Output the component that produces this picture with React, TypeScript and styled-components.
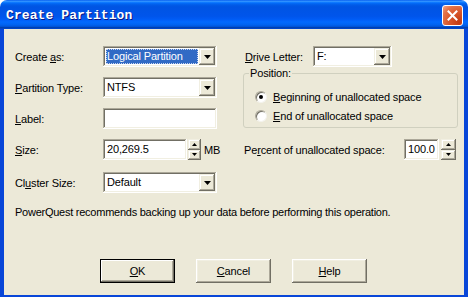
import React from 'react'
import styled, { createGlobalStyle } from 'styled-components'

const GlobalStyle = createGlobalStyle`
  html, body {
    margin: 0;
    padding: 0;
    background: #ffffff;
  }
  body {
    font-family: 'Liberation Sans', Arial, sans-serif;
    font-size: 11px;
    letter-spacing: -0.15px;
    color: #000;
  }
`

const sunken = `
  box-shadow: inset -1px -1px #ffffff, inset 1px 1px #aca899,
    inset -2px -2px #f1efe2, inset 2px 2px #716f64;
`

const raised = `
  box-shadow: inset -1px -1px #716f64, inset 1px 1px #f1efe2,
    inset -2px -2px #aca899, inset 2px 2px #ffffff;
`

const Window = styled.div`
  width: 468px;
  height: 297px;
  display: flex;
  flex-direction: column;
  overflow: hidden;
`

const TitleBar = styled.div`
  flex: none;
  height: 29px;
  box-sizing: border-box;
  padding: 2px 5px 0 6px;
  display: flex;
  align-items: center;
  justify-content: space-between;
  border-radius: 7px 7px 0 0;
  background: linear-gradient(
    to bottom,
    #0058ee 0%,
    #3593ff 4%,
    #288eff 6%,
    #127dff 8%,
    #036ffc 10%,
    #0262ee 14%,
    #0057e5 20%,
    #0054e3 24%,
    #0055eb 56%,
    #005bf5 66%,
    #026afe 76%,
    #0062ef 86%,
    #0052d6 92%,
    #0040ab 94%,
    #0046d2 100%
  );
`

const Title = styled.span`
  font-family: 'Liberation Mono', 'Courier New', monospace;
  font-weight: bold;
  font-size: 13px;
  color: #ffffff;
  text-shadow: 1px 1px #0a1883;
  letter-spacing: 0.1px;
`

const CloseButton = styled.div`
  width: 21px;
  height: 21px;
  box-sizing: border-box;
  border: 1px solid #ffffff;
  border-radius: 3px;
  display: flex;
  align-items: center;
  justify-content: center;
  background: radial-gradient(circle at 85% 85%, #c13a12 0%, #d9572b 45%, #e3734a 75%, #f0a589 100%);
`

const Body = styled.div`
  flex: 1;
  background: #ece9d8;
  border-style: solid;
  border-color: #0846d8;
  border-width: 0 4px 2px 4px;
  padding: 17px 0 0 11px;
  display: flex;
  flex-direction: column;
`

const Columns = styled.div`
  display: flex;
`

const LeftCol = styled.div`
  width: 228px;
  display: flex;
  flex-direction: column;
`

const RightCol = styled.div`
  width: 215px;
  display: flex;
  flex-direction: column;
`

const Row = styled.div<{ $mt?: number }>`
  height: 21px;
  margin-top: ${(p) => p.$mt ?? 0}px;
  display: flex;
  align-items: center;
`

const Label = styled.span<{ $w?: number; $pl?: number }>`
  box-sizing: border-box;
  width: ${(p) => (p.$w ? `${p.$w}px` : 'auto')};
  padding-left: ${(p) => p.$pl ?? 0}px;
  flex: none;
  white-space: nowrap;
`

const Combo = styled.div<{ $w: number }>`
  width: ${(p) => p.$w}px;
  height: 21px;
  box-sizing: border-box;
  padding: 2px;
  background: #ffffff;
  display: flex;
  ${sunken}
`

const ComboText = styled.div<{ $selected?: boolean }>`
  flex: 1;
  margin: 1px;
  padding-left: 1px;
  line-height: 15px;
  white-space: nowrap;
  overflow: hidden;
  background: ${(p) => (p.$selected ? '#316ac5' : 'transparent')};
  color: ${(p) => (p.$selected ? '#ffffff' : '#000000')};
  outline: ${(p) => (p.$selected ? '1px dotted #c8d4ee' : 'none')};
  outline-offset: -1px;
`

const ArrowButton = styled.div`
  width: 16px;
  flex: none;
  background: #ece9d8;
  display: flex;
  align-items: center;
  justify-content: center;
  ${raised}
`

const TextBox = styled.div<{ $w: number }>`
  width: ${(p) => p.$w}px;
  height: 21px;
  box-sizing: border-box;
  padding: 0 4px;
  background: #ffffff;
  line-height: 20px;
  ${sunken}
`

const Spinner = styled.div<{ $w: number; $ml?: number }>`
  width: ${(p) => p.$w}px;
  height: 21px;
  margin-left: ${(p) => p.$ml ?? 0}px;
  display: flex;
  flex-direction: column;
`

const SpinButton = styled.div`
  flex: 1;
  background: #ece9d8;
  display: flex;
  align-items: center;
  justify-content: center;
  ${raised}
`

const Unit = styled.span`
  margin-left: 3px;
`

const GroupBox = styled.fieldset`
  margin: 0;
  padding: 7px 0 2px 0;
  border: 1px solid #d0d0bf;
  border-radius: 3px;
  min-width: 0;
`

const Legend = styled.legend`
  margin-left: 5px;
  padding: 0 1px;
  line-height: 13px;
`

const RadioRow = styled.div`
  height: 19px;
  padding-left: 11px;
  display: flex;
  align-items: center;
  gap: 6px;
`

const RadioCircle = styled.div<{ $checked?: boolean }>`
  width: 12px;
  height: 12px;
  box-sizing: border-box;
  border-radius: 50%;
  background: #ffffff;
  border: 1px solid;
  border-color: #aca899 #f4f3ee #f4f3ee #aca899;
  box-shadow: inset 1px 1px #716f64;
  display: flex;
  align-items: center;
  justify-content: center;

  &::after {
    content: '';
    width: 4px;
    height: 4px;
    border-radius: 50%;
    background: ${(p) => (p.$checked ? '#000000' : 'transparent')};
  }
`

const Notice = styled.div`
  margin-top: 13px;
  line-height: 13px;
  letter-spacing: -0.25px;
  white-space: nowrap;
`

const ButtonRow = styled.div`
  margin-top: 40px;
  padding-left: 85px;
  display: flex;
  gap: 21px;
`

const Button = styled.div<{ $default?: boolean }>`
  width: 75px;
  height: 24px;
  display: flex;
  align-items: center;
  justify-content: center;
  background: #ece9d8;
  box-shadow: ${(p) =>
    p.$default
      ? 'inset 0 0 0 1px #000000, inset -2px -2px #716f64, inset 2px 2px #ffffff, inset -3px -3px #aca899'
      : 'inset -1px -1px #716f64, inset 1px 1px #ffffff, inset -2px -2px #aca899, inset 2px 2px #f1efe2'};
`

const DownArrow = ({ w = 7, h = 4 }: { w?: number; h?: number }) => (
  <svg width={w} height={h} viewBox={`0 0 ${w} ${h}`}>
    <polygon points={`0,0 ${w},0 ${w / 2},${h}`} fill="#000" />
  </svg>
)

const UpArrow = ({ w = 5, h = 3 }: { w?: number; h?: number }) => (
  <svg width={w} height={h} viewBox={`0 0 ${w} ${h}`}>
    <polygon points={`0,${h} ${w},${h} ${w / 2},0`} fill="#000" />
  </svg>
)

const Select = ({ width, value, selected }: { width: number; value: string; selected?: boolean }) => (
  <Combo $w={width}>
    <ComboText $selected={selected}>{value}</ComboText>
    <ArrowButton>
      <DownArrow />
    </ArrowButton>
  </Combo>
)

const Spin = ({ width, ml }: { width: number; ml?: number }) => (
  <Spinner $w={width} $ml={ml}>
    <SpinButton>
      <UpArrow />
    </SpinButton>
    <SpinButton>
      <DownArrow w={5} h={3} />
    </SpinButton>
  </Spinner>
)

const App = () => {
  return (
    <>
      <GlobalStyle />
      <Window>
        <TitleBar>
          <Title>Create Partition</Title>
          <CloseButton>
            <svg width="11" height="11" viewBox="0 0 11 11">
              <path d="M1.5 1.5 L9.5 9.5 M9.5 1.5 L1.5 9.5" stroke="#fff" strokeWidth="2" strokeLinecap="square" />
            </svg>
          </CloseButton>
        </TitleBar>
        <Body>
          <Columns>
            <LeftCol>
              <Row>
                <Label $w={88}>
                  Create <u>a</u>s:
                </Label>
                <Select width={114} value="Logical Partition" selected />
              </Row>
              <Row $mt={10}>
                <Label $w={88}>
                  <u>P</u>artition Type:
                </Label>
                <Select width={114} value="NTFS" />
              </Row>
              <Row $mt={10}>
                <Label $w={88}>
                  <u>L</u>abel:
                </Label>
                <TextBox $w={114} />
              </Row>
              <Row $mt={10}>
                <Label $w={88}>
                  <u>S</u>ize:
                </Label>
                <TextBox $w={84}>20,269.5</TextBox>
                <Spin width={13} ml={1} />
                <Unit>MB</Unit>
              </Row>
              <Row $mt={12}>
                <Label $w={88}>
                  Cl<u>u</u>ster Size:
                </Label>
                <Select width={114} value="Default" />
              </Row>
            </LeftCol>
            <RightCol>
              <Row>
                <Label $w={70} $pl={2}>
                  <u>D</u>rive Letter:
                </Label>
                <Select width={79} value="F:" />
              </Row>
              <GroupBox>
                <Legend>Position:</Legend>
                <RadioRow>
                  <RadioCircle $checked />
                  <span>
                    <u>B</u>eginning of unallocated space
                  </span>
                </RadioRow>
                <RadioRow>
                  <RadioCircle />
                  <span>
                    <u>E</u>nd of unallocated space
                  </span>
                </RadioRow>
              </GroupBox>
              <Row $mt={11}>
                <Label $w={161} $pl={1}>
                  Pe<u>r</u>cent of unallocated space:
                </Label>
                <TextBox $w={35}>100.0</TextBox>
                <Spin width={15} ml={2} />
              </Row>
            </RightCol>
          </Columns>
          <Notice>PowerQuest recommends backing up your data before performing this operation.</Notice>
          <ButtonRow>
            <Button $default>
              <u>O</u>K
            </Button>
            <Button>
              <u>C</u>ancel
            </Button>
            <Button>
              <u>H</u>elp
            </Button>
          </ButtonRow>
        </Body>
      </Window>
    </>
  )
}

export default App
